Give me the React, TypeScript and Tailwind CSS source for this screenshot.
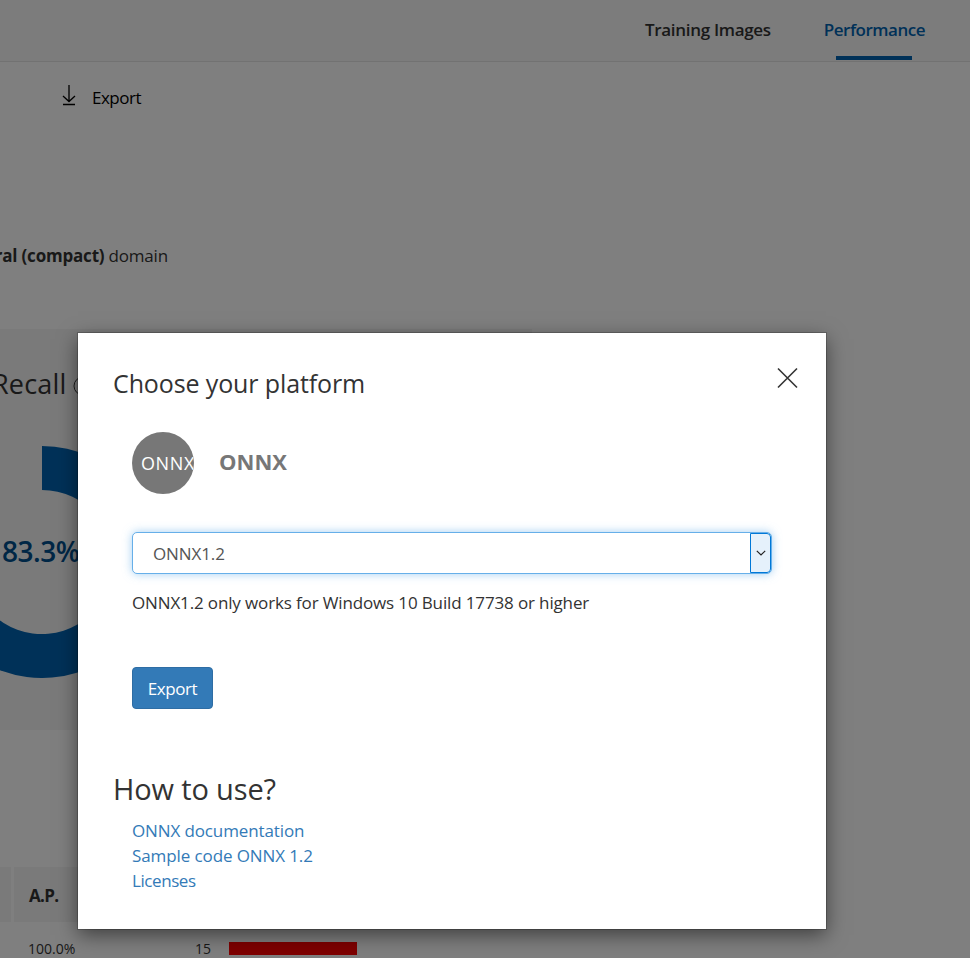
import React from "react";

function DownloadIcon() {
  return (
    <svg className="-mt-px" width="14" height="22" viewBox="0 0 14 22" fill="none" stroke="#000" strokeWidth="1.3">
      <path d="M7 1V17.5M1 12L7 17.5L13 12M1 20.5H13" />
    </svg>
  );
}

function CloseIcon() {
  return (
    <svg width="22" height="22" viewBox="0 0 22 22" fill="none" stroke="#333" strokeWidth="1.6">
      <path d="M2 1.5L21 20.5M21 1.5L2 20.5" />
    </svg>
  );
}

function RecallDonut() {
  return (
    <svg className="block" width="158" height="232" viewBox="0 0 158 232">
      <path
        d="M42 0A116 116 0 1 1 -58.5 58L-20.4 80A72 72 0 1 0 42 44Z"
        fill="#0063b1"
      />
    </svg>
  );
}

function Page() {
  return (
    <div className="flex h-full flex-col bg-white text-[#333]">
      <header className="flex h-[62px] shrink-0 justify-end border-b border-[#e4e4e4] bg-[#f8f8f8] pr-[45px] text-[17px] font-semibold">
        <div className="mr-[53px] pt-[18px] leading-6 tracking-[-0.31px]">Training Images</div>
        <div className="flex flex-col items-center pt-[18px] text-[#0063b1]">
          <span className="leading-6 tracking-[-0.49px]">Performance</span>
          <span className="mt-[14px] h-1 w-[76px] bg-[#0063b1]" />
        </div>
      </header>
      <div className="flex h-[70px] shrink-0 gap-4 pl-[62px] pt-[23px] text-black">
        <DownloadIcon />
        <span className="pt-px text-[17px] leading-6 tracking-[-0.5px]">Export</span>
      </div>
      <div className="flex h-[197px] shrink-0 pt-[112px] text-[17px]">
        <p className="-ml-[48px] whitespace-pre leading-6 tracking-[-0.2px]">
          <b className="tracking-[-0.2px]">General (compact)</b> domain
        </p>
      </div>
      <section className="h-[401px] w-[532px] shrink-0 bg-[#f4f4f4] pt-[37px]">
        <div className="-ml-[8px] flex items-center gap-[6px] text-[27px] leading-9">
          <span className="tracking-[0.2px]">Recall</span>
          <svg width="20" height="20" viewBox="0 0 20 20" fill="none" stroke="#333">
            <circle cx="10" cy="12" r="9" />
          </svg>
        </div>
        <div className="mt-[44px] grid">
          <div className="col-start-1 row-start-1">
            <RecallDonut />
          </div>
          <div className="col-start-1 row-start-1 self-center pb-[22px] pl-[2px] text-[28px] font-semibold tracking-[-0.5px] text-[#004e8c]">
            83.3%
          </div>
        </div>
      </section>
      <div className="mt-[137px] flex h-[55px] shrink-0 gap-[3px] text-[17px] font-bold">
        <div className="w-[11px] bg-[#f4f4f4]" />
        <div className="w-[160px] bg-[#f4f4f4] pl-[15px] leading-[58px] tracking-[-0.7px]">A.P.</div>
        <div className="w-[200px] bg-[#f4f4f4]" />
      </div>
      <div className="flex h-10 shrink-0 pl-[28px] pt-[17px] text-sm leading-5">
        <span className="w-[167px]">100.0%</span>
        <span className="w-[34px]">15</span>
        <span className="mt-[3px] h-[13px] w-[128px] bg-[#ff0000]" />
      </div>
    </div>
  );
}

function PlatformSelect() {
  return (
    <div className="flex h-[42px] w-[640px] rounded-[5px] border border-[#66afe9] bg-white shadow-[0_0_10px_rgba(102,175,233,0.6)]">
      <span className="flex-1 pl-5 pt-px text-[17px] leading-10 tracking-[-0.1px] text-[#555]">ONNX1.2</span>
      <span className="flex w-[21px] items-center justify-center rounded-r-[4px] border border-[#0078d7] bg-[#e5f1fb]">
        <svg className="-mt-px" width="10" height="6" viewBox="0 0 10 6" fill="none" stroke="#222" strokeWidth="1.2">
          <path d="M0.8 0.8L5 5L9.2 0.8" />
        </svg>
      </span>
    </div>
  );
}

function ExportDialog() {
  return (
    <div className="flex h-[596px] w-[748px] flex-col bg-white pl-[35px] pr-[28px] pt-[33px] text-[17px] text-[#333] shadow-[0_0_0_1px_rgba(0,0,0,0.2),0_6px_19px_rgba(0,0,0,0.5)]">
      <div className="flex h-[66px] justify-between">
        <h2 className="-mt-px text-[25px] leading-9 tracking-[-0.12px]">Choose your platform</h2>
        <span className="pt-[1px]">
          <CloseIcon />
        </span>
      </div>
      <div className="pl-[19px]">
        <div className="flex items-center">
          <div className="h-[62px] w-[62px] overflow-hidden rounded-full bg-[#777] pl-[9px] text-[18px] leading-[63px] text-white">
            <span className="whitespace-nowrap tracking-[0.6px]">ONNX</span>
          </div>
          <span className="ml-[25px] pb-[3px] text-[22px] font-bold text-[#777]">ONNX</span>
        </div>
        <div className="mt-[38px]">
          <PlatformSelect />
        </div>
        <p className="mt-[17px] leading-6 tracking-[-0.14px]">ONNX1.2 only works for Windows 10 Build 17738 or higher</p>
        <button className="mt-[52px] block h-[42px] w-[81px] rounded-[4px] border border-[#2e6da4] bg-[#337ab7] pt-px tracking-[-0.4px] text-white">
          Export
        </button>
      </div>
      <h2 className="mt-[60px] text-[29px] leading-10 tracking-[-0.15px]">How to use?</h2>
      <div className="mt-[9px] flex flex-col pl-[19px] leading-[25px] text-[#337ab7]">
        <a className="tracking-[-0.12px]">ONNX documentation</a>
        <a className="tracking-[-0.1px]">Sample code ONNX 1.2</a>
        <a className="tracking-[-0.42px]">Licenses</a>
      </div>
    </div>
  );
}

export default function App() {
  return (
    <div className="relative h-[958px] w-[970px] overflow-hidden font-['Open_Sans','Noto_Sans',sans-serif]">
      <Page />
      <div className="absolute inset-0 bg-black/50 pl-[78px] pt-[333px]">
        <ExportDialog />
      </div>
    </div>
  );
}
